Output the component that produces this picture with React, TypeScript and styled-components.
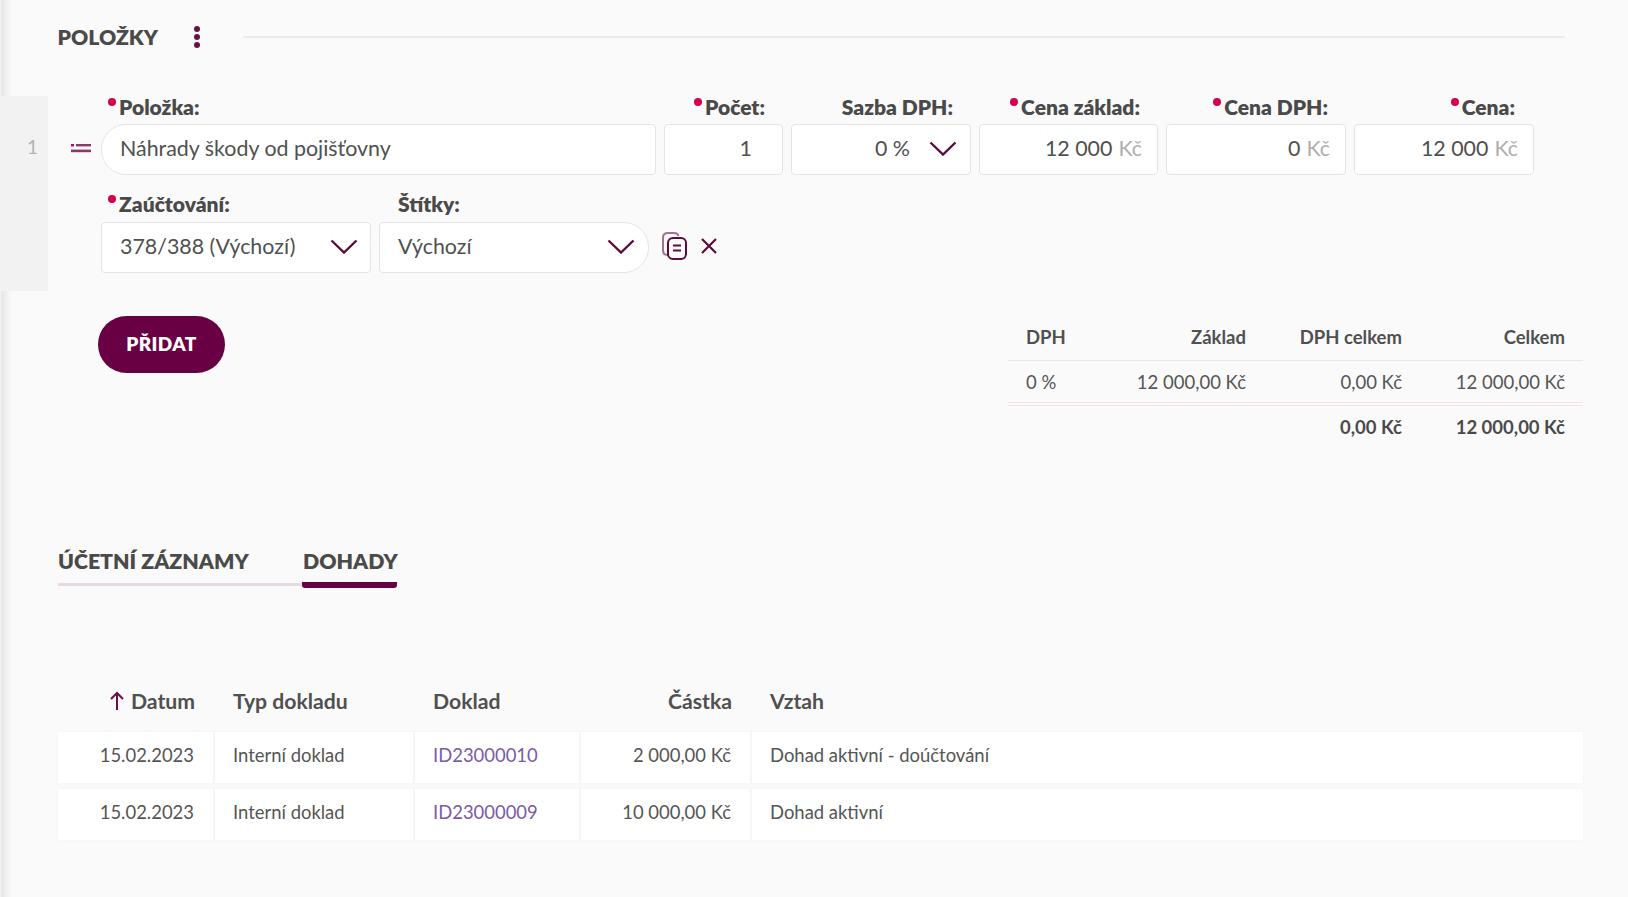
import React from "react";
import styled, { createGlobalStyle } from "styled-components";

const plum = "#6a0044";
const text = "#4a4a4a";

const Global = createGlobalStyle`
  html, body { margin: 0; padding: 0; background: #fafafa; }
  body { font-family: Lato, "Noto Sans", sans-serif; color: ${text}; overflow: hidden; }
  * { box-sizing: border-box; }
`;

const Page = styled.div`
  position: relative;
  width: 1628px;
  height: 897px;
  overflow: hidden;
  background: linear-gradient(90deg, #f6f6f6 0, #e6e6e6 2px, #f0f0f0 6px, #fafafa 12px);
`;

const Header = styled.header`
  display: flex;
  align-items: center;
  height: 34px;
  margin: 20px 63px 0 57.5px;
`;
const Title = styled.h2`
  margin: 0;
  font-size: 21.2px;
  font-weight: 800;
  line-height: 34px;
  text-transform: uppercase;
`;
const MenuDots = styled.svg`
  width: 8px;
  height: 24px;
  margin-left: 35px;
  flex: none;
`;
const Rule = styled.div`
  flex: 1;
  height: 2px;
  margin-left: 42px;
  background: #ebebeb;
`;

const ItemRow = styled.section`
  display: flex;
  margin-top: 42px;
`;
const Strip = styled.div`
  flex: none;
  width: 48px;
  padding: 39px 0 0 27px;
  background: #f2f2f2;
  color: #b2b2b2;
  font-size: 19px;
  line-height: 24px;
`;
const Handle = styled.svg`
  flex: none;
  width: 20px;
  height: 10px;
  margin: 47px 10px 0 23px;
`;
const Fields = styled.div`
  display: flex;
  flex-direction: column;
  gap: 19px;
  padding-bottom: 18px;
`;
const FieldLine = styled.div`
  display: flex;
  gap: 8px;
`;
const Field = styled.div<{ $w: number }>`
  display: flex;
  flex-direction: column;
  width: ${(p) => p.$w}px;
`;
const Label = styled.label<{ $right?: boolean; $inset?: number }>`
  display: block;
  height: 22px;
  margin-bottom: 6px;
  padding: 0 ${(p) => p.$inset ?? 0}px 0 ${(p) => (p.$right ? 0 : 19)}px;
  font-size: 21px;
  font-weight: 800;
  line-height: 22px;
  white-space: nowrap;
  text-align: ${(p) => (p.$right ? "right" : "left")};
`;
const LowerLabel = styled(Label)`
  margin-top: -1px;
  margin-bottom: 7px;
`;
const Req = styled.span`
  display: inline-block;
  width: 8px;
  height: 8px;
  margin: 0 3px 0 -12px;
  border-radius: 50%;
  background: #d6004f;
  vertical-align: 9px;
`;
const RightReq = styled(Req)`
  margin-left: 0;
`;
const Box = styled.div<{ $round?: "left" | "right"; $right?: boolean; $pr?: number }>`
  display: flex;
  align-items: center;
  justify-content: ${(p) => (p.$right ? "flex-end" : "space-between")};
  height: 51px;
  padding: 0 ${(p) => p.$pr ?? 15}px 4px 18px;
  background: #fff;
  border: 1px solid #e4e4e4;
  border-radius: ${(p) =>
    p.$round === "left" ? "25px 4px 4px 25px" : p.$round === "right" ? "4px 25px 25px 4px" : "4px"};
  font-size: 21.4px;
  line-height: 26px;
  white-space: nowrap;
  color: #505050;
`;
const Unit = styled.span`
  margin-left: 6px;
  color: #aeaeae;
`;
const Chevron = styled.svg<{ $gap?: number }>`
  flex: none;
  width: 28px;
  height: 15px;
  margin-top: 2px;
  margin-left: ${(p) => p.$gap ?? 0}px;
`;
const Actions = styled.div`
  display: flex;
  align-items: center;
  align-self: flex-end;
  height: 51px;
  padding-bottom: 4px;
  margin-left: 5px;
  gap: 11px;
`;
const CopyIcon = styled.svg`
  width: 26px;
  height: 28px;
`;
const CloseIcon = styled.svg`
  width: 20px;
  height: 20px;
`;

const Lower = styled.section`
  display: flex;
  justify-content: space-between;
  align-items: flex-start;
  margin: 25px 45px 0 98px;
`;
const AddButton = styled.button`
  width: 127px;
  height: 57px;
  border: 0;
  border-radius: 29px;
  background: ${plum};
  color: #fff;
  font: 800 19px Lato, sans-serif;
  letter-spacing: 0.4px;
  padding: 0 0 2px;
`;
const Summary = styled.div`
  width: 575px;
`;
const SummaryRow = styled.div<{ $line?: "single" | "double"; $h: number; $bold?: boolean }>`
  display: grid;
  grid-template-columns: 100px 120px 156px 163px;
  align-items: center;
  height: ${(p) => p.$h}px;
  padding: 0 18px;
  font-size: 18.5px;
  font-weight: ${(p) => (p.$bold ? 700 : 400)};
  color: ${(p) => (p.$bold ? text : "#555")};
  border-bottom: ${(p) => (p.$line === "double" ? "4px double #f1e3e6" : p.$line ? "1px solid #f1e3e6" : "0")};
`;
const SumHead = styled(SummaryRow)`
  padding-bottom: 2px;
  font-weight: 700;
  color: #505050;
`;
const Num = styled.span`
  text-align: right;
`;

const Tabs = styled.nav`
  display: flex;
  align-items: flex-start;
  width: 339px;
  margin: 98px 0 0 58px;
`;
const Tab = styled.div<{ $active?: boolean }>`
  flex: none;
  width: ${(p) => (p.$active ? 95 : 244)}px;
  height: ${(p) => (p.$active ? 42 : 40)}px;
  padding-left: ${(p) => (p.$active ? 1 : 0)}px;
  font-size: 21.3px;
  font-weight: 800;
  line-height: 30px;
  text-transform: uppercase;
  white-space: nowrap;
  border-bottom: ${(p) => (p.$active ? 6 : 3)}px solid ${(p) => (p.$active ? plum : "#e8d9e4")};
  border-radius: ${(p) => (p.$active ? "3px" : "0")};
`;

const columns = "157px 200px 166px 171px 1fr";
const HeadRow = styled.div`
  display: grid;
  grid-template-columns: ${columns};
  align-items: center;
  height: 36px;
  margin: 95px 45px 0 58px;
  font-size: 21.2px;
  font-weight: 700;
  color: #505050;
`;
const RowList = styled.div`
  display: flex;
  flex-direction: column;
  gap: 6px;
  margin: 13px 45px 0 58px;
`;
const Row = styled.div`
  display: grid;
  grid-template-columns: ${columns};
  height: 51px;
  background: #fff;
  box-shadow: 0 0 3px rgba(0, 0, 0, 0.03);
  font-size: 18.45px;
  color: #555;
`;
const HeadCell = styled.div<{ $right?: boolean }>`
  display: flex;
  align-items: center;
  justify-content: ${(p) => (p.$right ? "flex-end" : "flex-start")};
  padding: 0 ${(p) => (p.$right ? 20 : 0)}px 0 18px;
`;
const Cell = styled.div<{ $right?: boolean }>`
  display: flex;
  align-items: center;
  justify-content: ${(p) => (p.$right ? "flex-end" : "flex-start")};
  padding: 0 19px 5px 18px;
  border-right: 2px solid #f6f6f6;
  &:last-child { border-right: 0; }
`;
const DocLink = styled.a`
  color: #7a5ba8;
  text-decoration: none;
`;
const SortArrow = styled.svg`
  width: 16px;
  height: 20px;
  margin-right: 6px;
`;

const ChevronDown = ({ gap }: { gap?: number }) => (
  <Chevron $gap={gap} viewBox="0 0 28 15" fill="none" stroke="#5c0a3c" strokeWidth="2.4">
    <path d="M1.5 1.5 14 13.5 26.5 1.5" />
  </Chevron>
);

const rows = [
  ["15.02.2023", "Interní doklad", "ID23000010", "2 000,00 Kč", "Dohad aktivní - doúčtování"],
  ["15.02.2023", "Interní doklad", "ID23000009", "10 000,00 Kč", "Dohad aktivní"],
];

export default function App() {
  return (
    <Page>
      <Global />
      <Header>
        <Title>Položky</Title>
        <MenuDots viewBox="0 0 8 24" fill="#6a1048">
          <circle cx="4" cy="4" r="3" />
          <circle cx="4" cy="12" r="3" />
          <circle cx="4" cy="20" r="3" />
        </MenuDots>
        <Rule />
      </Header>

      <ItemRow>
        <Strip>1</Strip>
        <Handle viewBox="0 0 20 10">
          <rect x="0" y="1" width="3" height="2.4" fill="#d6004f" />
          <rect x="5" y="1" width="15" height="2.4" fill="#8a3a66" />
          <rect x="0" y="6.6" width="20" height="2.6" fill="#8a3a66" />
        </Handle>
        <Fields>
          <FieldLine>
            <Field $w={555}>
              <Label><Req />Položka:</Label>
              <Box $round="left">Náhrady škody od pojišťovny</Box>
            </Field>
            <Field $w={119}>
              <Label $right $inset={18}><RightReq />Počet:</Label>
              <Box $right $pr={30}>1</Box>
            </Field>
            <Field $w={180}>
              <Label $right $inset={18}>Sazba DPH:</Label>
              <Box $right $pr={13}>0 %<ChevronDown gap={19} /></Box>
            </Field>
            <Field $w={179}>
              <Label $right $inset={18}><RightReq />Cena základ:</Label>
              <Box $right>12 000<Unit>Kč</Unit></Box>
            </Field>
            <Field $w={180}>
              <Label $right $inset={18}><RightReq />Cena DPH:</Label>
              <Box $right>0<Unit>Kč</Unit></Box>
            </Field>
            <Field $w={180}>
              <Label $right $inset={19}><RightReq />Cena:</Label>
              <Box $right>12 000<Unit>Kč</Unit></Box>
            </Field>
          </FieldLine>
          <FieldLine>
            <Field $w={270}>
              <LowerLabel><Req />Zaúčtování:</LowerLabel>
              <Box $pr={12}>378/388 (Výchozí)<ChevronDown /></Box>
            </Field>
            <Field $w={270}>
              <LowerLabel>Štítky:</LowerLabel>
              <Box $round="right" $pr={13}>Výchozí<ChevronDown /></Box>
            </Field>
            <Actions>
              <CopyIcon viewBox="0 0 26 28" fill="none" strokeWidth="2">
                <path d="M6 23c-3 0-5-1.600-5-4.500V5.500c0-3 2-4.500 5-4.500h6c2.500 0 4 1 4.500 3" stroke="#a5708f" />
                <rect x="6" y="6" width="18" height="21" rx="5" stroke="#5c0a3c" />
                <path d="M11 13.500h8M11 18.500h8" stroke="#5c0a3c" />
              </CopyIcon>
              <CloseIcon viewBox="0 0 20 20" fill="none" stroke="#5c0a3c" strokeWidth="2.200">
                <path d="M3 3l14 14M17 3 3 17" />
              </CloseIcon>
            </Actions>
          </FieldLine>
        </Fields>
      </ItemRow>

      <Lower>
        <AddButton>PŘIDAT</AddButton>
        <Summary>
          <SumHead $h={45} $line="single">
            <span>DPH</span><Num>Základ</Num><Num>DPH celkem</Num><Num>Celkem</Num>
          </SumHead>
          <SummaryRow $h={45} $line="double">
            <span>0 %</span><Num>12 000,00 Kč</Num><Num>0,00 Kč</Num><Num>12 000,00 Kč</Num>
          </SummaryRow>
          <SummaryRow $h={42} $bold>
            <span /><Num /><Num>0,00 Kč</Num><Num>12 000,00 Kč</Num>
          </SummaryRow>
        </Summary>
      </Lower>

      <Tabs>
        <Tab>Účetní záznamy</Tab>
        <Tab $active>Dohady</Tab>
      </Tabs>

      <HeadRow>
        <HeadCell $right>
          <SortArrow viewBox="0 0 16 20" fill="none" stroke="#6a1048" strokeWidth="2">
            <path d="M8 19V2M2 8l6-6 6 6" />
          </SortArrow>
          Datum
        </HeadCell>
        <HeadCell>Typ dokladu</HeadCell>
        <HeadCell>Doklad</HeadCell>
        <HeadCell $right>Částka</HeadCell>
        <HeadCell>Vztah</HeadCell>
      </HeadRow>
      <RowList>
        {rows.map((r) => (
          <Row key={r[2]}>
            <Cell $right>{r[0]}</Cell>
            <Cell>{r[1]}</Cell>
            <Cell><DocLink href="#">{r[2]}</DocLink></Cell>
            <Cell $right>{r[3]}</Cell>
            <Cell>{r[4]}</Cell>
          </Row>
        ))}
      </RowList>
    </Page>
  );
}
